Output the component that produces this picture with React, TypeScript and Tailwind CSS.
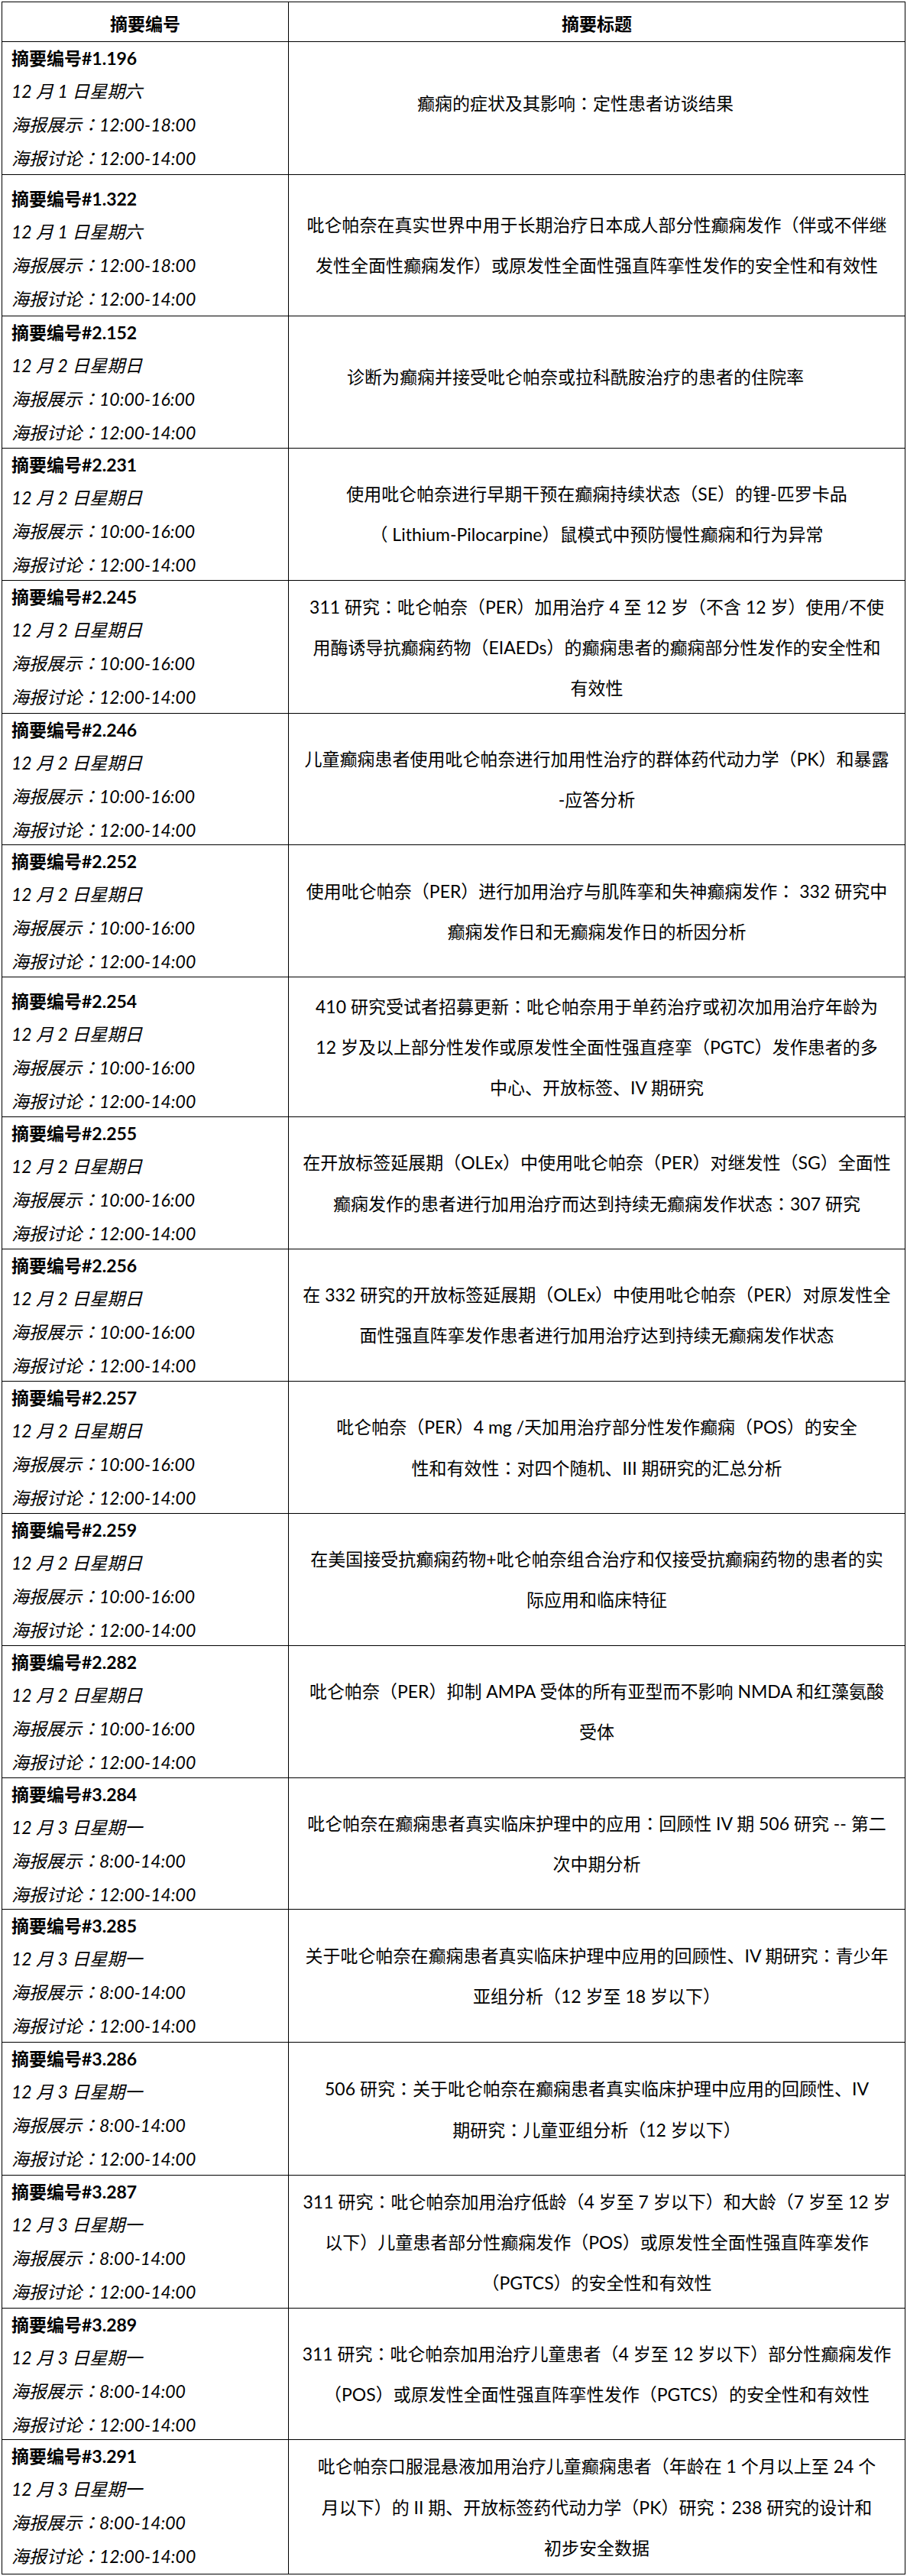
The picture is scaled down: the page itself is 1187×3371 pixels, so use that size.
import React from "react";

type Row = {
  id: string;
  date: string;
  show: string;
  h: string;
  lp?: string;
  tp?: string;
  title: string[];
};

const D1 = "12 月 1 日星期六";
const D2 = "12 月 2 日星期日";
const D3 = "12 月 3 日星期一";

const rows: Row[] = [
  { id: "1.196", date: D1, show: "12:00-18:00", h: "h-[174px]", tp: "pr-[56px] pb-[14px]", title: ["癫痫的症状及其影响：定性患者访谈结果"] },
  { id: "1.322", date: D1, show: "12:00-18:00", h: "h-[185px]", lp: "pt-[10px]", title: ["吡仑帕奈在真实世界中用于长期治疗日本成人部分性癫痫发作（伴或不伴继", "发性全面性癫痫发作）或原发性全面性强直阵挛性发作的安全性和有效性"] },
  { id: "2.152", date: D2, show: "10:00-16:00", h: "h-[173px]", tp: "pr-[56px] pb-[14px]", title: ["诊断为癫痫并接受吡仑帕奈或拉科酰胺治疗的患者的住院率"] },
  { id: "2.231", date: D2, show: "10:00-16:00", h: "h-[173px]", title: ["使用吡仑帕奈进行早期干预在癫痫持续状态（SE）的锂-匹罗卡品", "（ Lithium-Pilocarpine）鼠模式中预防慢性癫痫和行为异常"] },
  { id: "2.245", date: D2, show: "10:00-16:00", h: "h-[174px]", title: ["311 研究：吡仑帕奈（PER）加用治疗 4 至 12 岁（不含 12 岁）使用/不使", "用酶诱导抗癫痫药物（EIAEDs）的癫痫患者的癫痫部分性发作的安全性和", "有效性"] },
  { id: "2.246", date: D2, show: "10:00-16:00", h: "h-[172px]", title: ["儿童癫痫患者使用吡仑帕奈进行加用性治疗的群体药代动力学（PK）和暴露", "-应答分析"] },
  { id: "2.252", date: D2, show: "10:00-16:00", h: "h-[173px]", title: ["使用吡仑帕奈（PER）进行加用治疗与肌阵挛和失神癫痫发作： 332 研究中", "癫痫发作日和无癫痫发作日的析因分析"] },
  { id: "2.254", date: D2, show: "10:00-16:00", h: "h-[183px]", lp: "pt-[10px]", title: ["410 研究受试者招募更新：吡仑帕奈用于单药治疗或初次加用治疗年龄为", "12 岁及以上部分性发作或原发性全面性强直痉挛（PGTC）发作患者的多", "中心、开放标签、IV 期研究"] },
  { id: "2.255", date: D2, show: "10:00-16:00", h: "h-[173px]", title: ["在开放标签延展期（OLEx）中使用吡仑帕奈（PER）对继发性（SG）全面性", "癫痫发作的患者进行加用治疗而达到持续无癫痫发作状态：307 研究"] },
  { id: "2.256", date: D2, show: "10:00-16:00", h: "h-[173px]", title: ["在 332 研究的开放标签延展期（OLEx）中使用吡仑帕奈（PER）对原发性全", "面性强直阵挛发作患者进行加用治疗达到持续无癫痫发作状态"] },
  { id: "2.257", date: D2, show: "10:00-16:00", h: "h-[173px]", title: ["吡仑帕奈（PER）4 mg /天加用治疗部分性发作癫痫（POS）的安全", "性和有效性：对四个随机、III 期研究的汇总分析"] },
  { id: "2.259", date: D2, show: "10:00-16:00", h: "h-[173px]", title: ["在美国接受抗癫痫药物+吡仑帕奈组合治疗和仅接受抗癫痫药物的患者的实", "际应用和临床特征"] },
  { id: "2.282", date: D2, show: "10:00-16:00", h: "h-[173px]", title: ["吡仑帕奈（PER）抑制 AMPA 受体的所有亚型而不影响 NMDA 和红藻氨酸", "受体"] },
  { id: "3.284", date: D3, show: "8:00-14:00", h: "h-[172px]", title: ["吡仑帕奈在癫痫患者真实临床护理中的应用：回顾性 IV 期 506 研究 -- 第二", "次中期分析"] },
  { id: "3.285", date: D3, show: "8:00-14:00", h: "h-[174px]", title: ["关于吡仑帕奈在癫痫患者真实临床护理中应用的回顾性、IV 期研究：青少年", "亚组分析（12 岁至 18 岁以下）"] },
  { id: "3.286", date: D3, show: "8:00-14:00", h: "h-[174px]", title: ["506 研究：关于吡仑帕奈在癫痫患者真实临床护理中应用的回顾性、IV", "期研究：儿童亚组分析（12 岁以下）"] },
  { id: "3.287", date: D3, show: "8:00-14:00", h: "h-[174px]", title: ["311 研究：吡仑帕奈加用治疗低龄（4 岁至 7 岁以下）和大龄（7 岁至 12 岁", "以下）儿童患者部分性癫痫发作（POS）或原发性全面性强直阵挛发作", "（PGTCS）的安全性和有效性"] },
  { id: "3.289", date: D3, show: "8:00-14:00", h: "h-[172px]", title: ["311 研究：吡仑帕奈加用治疗儿童患者（4 岁至 12 岁以下）部分性癫痫发作", "（POS）或原发性全面性强直阵挛性发作（PGTCS）的安全性和有效性"] },
  { id: "3.291", date: D3, show: "8:00-14:00", h: "h-[176px]", title: ["吡仑帕奈口服混悬液加用治疗儿童癫痫患者（年龄在 1 个月以上至 24 个", "月以下）的 II 期、开放标签药代动力学（PK）研究：238 研究的设计和", "初步安全数据"] },
];

function T({ s }: { s: string }) {
  const parts = s.split(/(：)/);
  return (
    <>
      {parts.map((p, i) =>
        p === "：" ? (
          <span key={i} className="font-['Noto_Sans_CJK_TC',sans-serif]">
            ：
          </span>
        ) : (
          <React.Fragment key={i}>{p}</React.Fragment>
        )
      )}
    </>
  );
}

export default function App() {
  return (
    <div className="min-h-[3371px] bg-white pl-[2px] pt-[2px] text-[23px] text-black font-['Lato','Noto_Sans_CJK_SC',sans-serif]">
      <div className="w-[1183px] border border-black">
        <div className="flex h-[51px]">
          <div className="flex w-[375px] shrink-0 items-center justify-center border-r border-black pt-[6px] font-bold">
            摘要编号
          </div>
          <div className="flex flex-1 items-center justify-center pt-[6px] font-bold">
            摘要标题
          </div>
        </div>
        {rows.map((r) => (
          <div key={r.id} className={`flex border-t border-black ${r.h}`}>
            <div className={`w-[375px] shrink-0 border-r border-black pl-[12px] leading-[43px] ${r.lp ?? ""}`}>
              <div className="font-bold">摘要编号#{r.id}</div>
              <div className="italic">{r.date}</div>
              <div className="italic">
                <T s={`海报展示：${r.show}`} />
              </div>
              <div className="italic">
                <T s="海报讨论：12:00-14:00" />
              </div>
            </div>
            <div className={`flex flex-1 flex-col items-center justify-center text-center leading-[53px] ${r.tp ?? ""}`}>
              {r.title.map((l, i) => (
                <div key={i} className="whitespace-nowrap">
                  <T s={l} />
                </div>
              ))}
            </div>
          </div>
        ))}
      </div>
    </div>
  );
}
